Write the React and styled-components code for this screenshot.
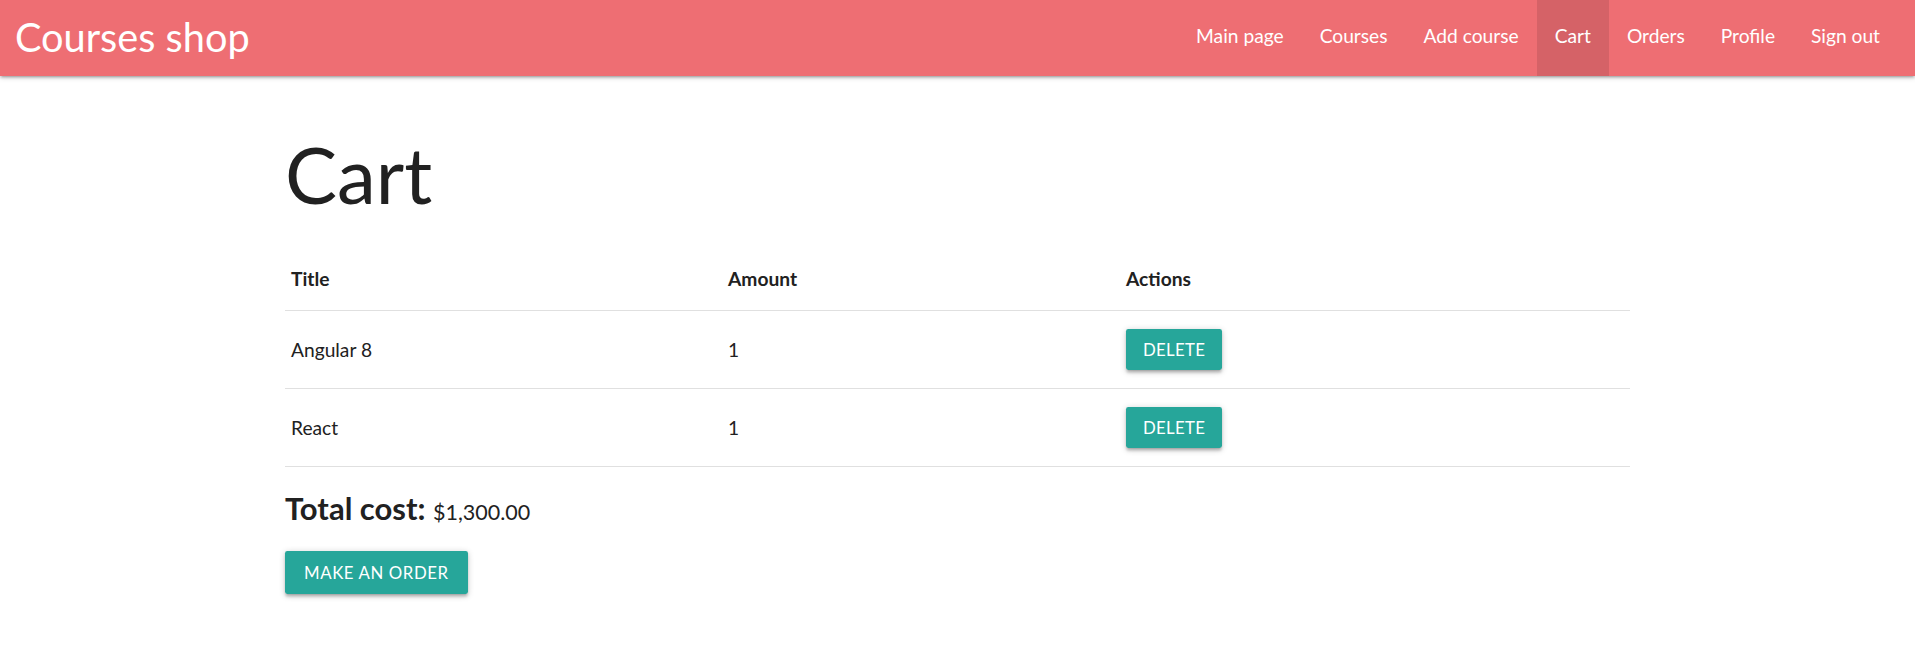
import React from "react";
import styled, { createGlobalStyle } from "styled-components";

const GlobalStyle = createGlobalStyle`
  html, body { margin: 0; padding: 0; background: #fff; }
  body {
    font-family: Lato, "Open Sans", sans-serif;
    color: rgba(0, 0, 0, 0.87);
    font-weight: 400;
  }
  * { box-sizing: border-box; }
`;

const NavBar = styled.nav`
  position: relative;
  z-index: 2;
  height: 76px;
  background: #ee6e73;
  color: #fff;
  display: flex;
  justify-content: space-between;
  align-items: stretch;
  padding: 0 17px 0 15px;
  box-shadow: 0 2.4px 2.4px 0 rgba(0, 0, 0, 0.14),
    0 3.6px 1.2px -2.4px rgba(0, 0, 0, 0.12),
    0 1.2px 6px 0 rgba(0, 0, 0, 0.2);
`;

const Brand = styled.a`
  font-size: 39.7px;
  line-height: 73px;
  color: #fff;
  text-decoration: none;
  white-space: nowrap;
`;

const NavList = styled.ul`
  list-style: none;
  margin: 0;
  padding: 0;
  display: flex;
  align-items: stretch;
`;

const NavItem = styled.li`
  display: flex;
  background: ${(p) => (p.$active ? "rgba(0, 0, 0, 0.1)" : "transparent")};
`;

const NavLink = styled.a`
  display: block;
  padding: 0 18px;
  font-size: 19.2px;
  line-height: 71px;
  color: #fff;
  text-decoration: none;
  white-space: nowrap;
`;

const Container = styled.main`
  width: 1345px;
  margin: 0 auto;
  padding-top: 59px;
  padding-bottom: 40px;
`;

const Heading = styled.h1`
  margin: 0 0 33.5px;
  font-size: 78px;
  line-height: 1;
  font-weight: 400;
  color: #212121;
`;

const Table = styled.table`
  width: 100%;
  border-collapse: collapse;
  border-spacing: 0;
`;

const Row = styled.tr`
  border-bottom: 1px solid rgba(0, 0, 0, 0.12);
`;

const HeadCell = styled.th`
  height: 64px;
  padding: 0 6px;
  text-align: left;
  vertical-align: middle;
  font-size: 19.2px;
  font-weight: 700;
  color: #212121;
  width: ${(p) => p.$w || "auto"};
`;

const Cell = styled.td`
  height: 78px;
  padding: 0 6px;
  vertical-align: middle;
  font-size: 19.2px;
  color: #212121;
`;

const Button = styled.button`
  display: inline-flex;
  align-items: center;
  justify-content: center;
  height: ${(p) => (p.$tall ? "43px" : "41px")};
  padding: 0 ${(p) => (p.$tall ? "19px" : "17px")};
  border: none;
  border-radius: 2.4px;
  background: #26a69a;
  color: #fff;
  font-family: Lato, "Open Sans", sans-serif;
  font-size: 16.8px;
  letter-spacing: ${(p) => (p.$tall ? "0.6px" : "0.3px")};
  text-transform: uppercase;
  cursor: pointer;
  box-shadow: 0 2.4px 2.4px 0 rgba(0, 0, 0, 0.14),
    0 3.6px 1.2px -2.4px rgba(0, 0, 0, 0.12),
    0 1.2px 6px 0 rgba(0, 0, 0, 0.2);
`;

const Total = styled.h5`
  margin: 26px 0 27px;
  font-size: 31px;
  line-height: 1;
  font-weight: 700;
  color: #212121;
`;

const Price = styled.span`
  font-size: 21.5px;
  font-weight: 400;
`;

const links = ["Main page", "Courses", "Add course", "Cart", "Orders", "Profile", "Sign out"];

const items = [
  { title: "Angular 8", amount: 1 },
  { title: "React", amount: 1 },
];

export default function App() {
  return (
    <>
      <GlobalStyle />
      <NavBar>
        <Brand href="#">Courses shop</Brand>
        <NavList>
          {links.map((l) => (
            <NavItem key={l} $active={l === "Cart"}>
              <NavLink href="#">{l}</NavLink>
            </NavItem>
          ))}
        </NavList>
      </NavBar>
      <Container>
        <Heading>Cart</Heading>
        <Table>
          <thead>
            <Row>
              <HeadCell $w="437px">Title</HeadCell>
              <HeadCell $w="398px">Amount</HeadCell>
              <HeadCell>Actions</HeadCell>
            </Row>
          </thead>
          <tbody>
            {items.map((it) => (
              <Row key={it.title}>
                <Cell>{it.title}</Cell>
                <Cell>{it.amount}</Cell>
                <Cell>
                  <Button>Delete</Button>
                </Cell>
              </Row>
            ))}
          </tbody>
        </Table>
        <Total>
          Total cost: <Price>$1,300.00</Price>
        </Total>
        <Button $tall>Make an order</Button>
      </Container>
    </>
  );
}
